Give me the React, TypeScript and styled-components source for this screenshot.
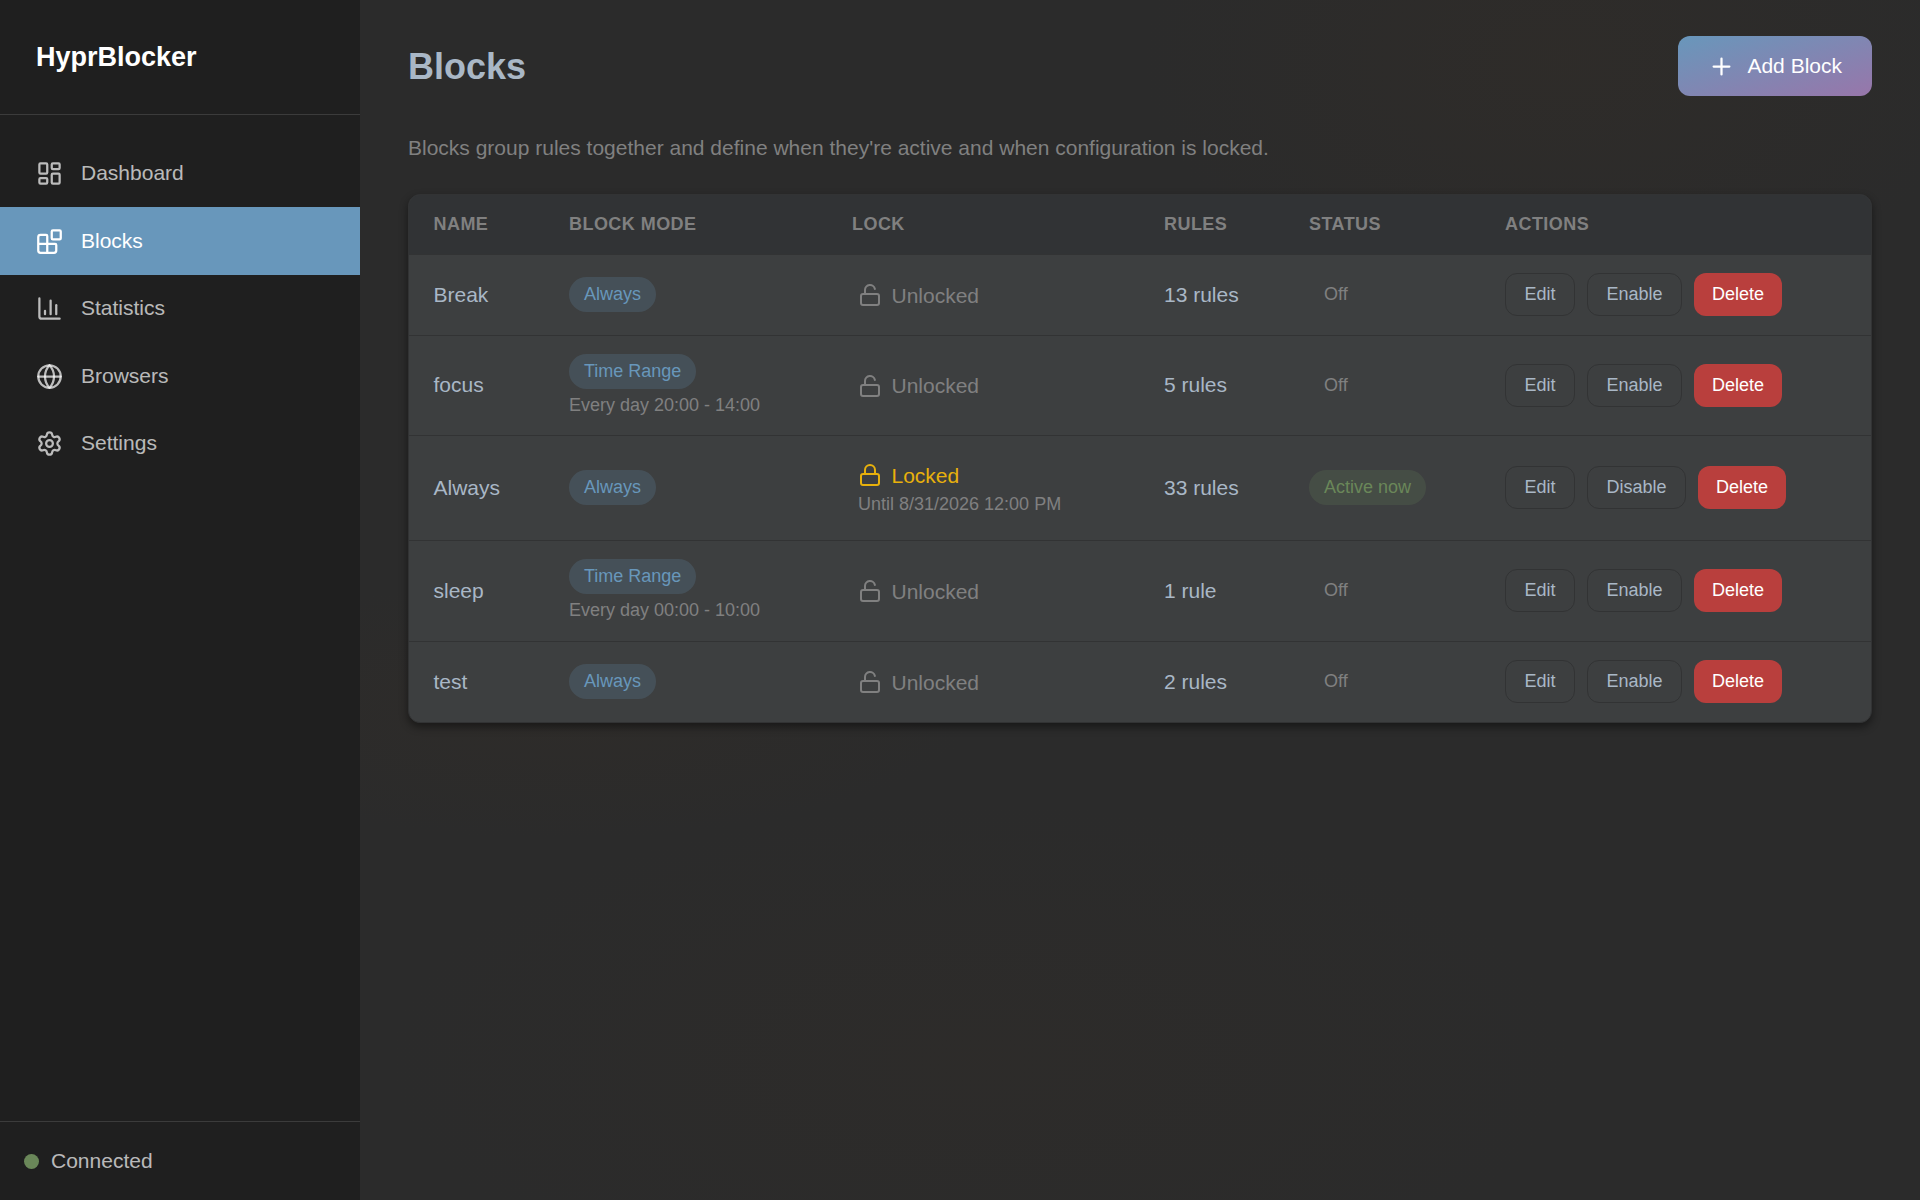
import React from 'react';
import styled, { createGlobalStyle, css } from 'styled-components';
import {
  LayoutDashboard,
  Blocks as BlocksIcon,
  ChartColumn,
  Globe,
  Settings,
  Plus,
  Lock,
  LockOpen,
} from 'lucide-react';

const color = {
  text: '#a9b7c6',
  muted: '#808080',
  primary: '#6897bb',
  purple: '#9876aa',
  green: '#6a8759',
  danger: '#b93f3d',
  warning: '#e8b10c',
  border: '#323334',
};

const GlobalStyle = createGlobalStyle`
  * { box-sizing: border-box; }
  body {
    margin: 0;
    font-family: "Liberation Sans", Arial, sans-serif;
    font-size: 21px;
    color: ${color.text};
    background: #2b2b2b;
  }
`;

const Shell = styled.div`
  display: flex;
  height: 1200px;
  background:
    radial-gradient(ellipse 420px 260px at 1560px 60px, rgba(64, 48, 32, 0.16), transparent),
    radial-gradient(ellipse 420px 130px at 560px 710px, rgba(64, 48, 32, 0.14), transparent),
    radial-gradient(ellipse 600px 260px at 980px 1060px, rgba(64, 48, 32, 0.1), transparent),
    #2b2b2b;
`;

const Sidebar = styled.aside`
  display: flex;
  flex-direction: column;
  width: 360px;
  flex-shrink: 0;
  background: #1f1f1f;
  color: rgba(255, 255, 255, 0.7);
`;

const Brand = styled.div`
  height: 115px;
  padding: 37px 36px 0;
  border-bottom: 1px solid #3b3b3b;
  color: #fff;
  font-size: 27px;
  font-weight: 700;
  line-height: 40px;
`;

const Nav = styled.nav`
  display: flex;
  flex-direction: column;
  flex: 1;
  padding-top: 24.5px;
`;

const NavItem = styled.a<{ $active?: boolean }>`
  display: flex;
  align-items: center;
  gap: 18px;
  height: 67.5px;
  padding: 0 36px;
  line-height: 31px;
  ${(p) =>
    p.$active &&
    css`
      background: ${color.primary};
      color: #fff;
    `}

  svg {
    position: relative;
    top: 0.5px;
  }
`;

const NavLabel = styled.span`
  padding-bottom: 1px;
`;

const Connection = styled.div`
  display: flex;
  align-items: center;
  gap: 12px;
  height: 79px;
  padding: 0 24px;
  border-top: 1px solid #3b3b3b;
`;

const Dot = styled.span`
  width: 15px;
  height: 15px;
  border-radius: 50%;
  background: ${color.green};
`;

const Main = styled.main`
  flex: 1;
  padding: 36px 48px;
`;

const PageHeader = styled.header`
  display: flex;
  align-items: center;
  justify-content: space-between;
  height: 60px;
`;

const Title = styled.h1`
  margin: 2px 0 0;
  font-size: 36px;
  line-height: 54px;
`;

const AddButton = styled.button`
  display: flex;
  align-items: center;
  gap: 12px;
  height: 60px;
  padding: 0 30px;
  border: 0;
  border-radius: 12px;
  background: linear-gradient(to bottom right, ${color.primary}, ${color.purple});
  color: #fff;
  font: inherit;
`;

const Intro = styled.p`
  margin: 35.5px 0 30.5px;
  color: ${color.muted};
  line-height: 31.5px;
`;

const Card = styled.section`
  overflow: hidden;
  border: 1px solid ${color.border};
  border-radius: 12px;
  background: #3d3f40;
  box-shadow: 0 4px 9px rgba(0, 0, 0, 0.45);
`;

const Table = styled.table`
  width: 100%;
  table-layout: fixed;
  border-collapse: separate;
  border-spacing: 0;
`;

const Col = styled.col<{ $width?: number }>`
  width: ${(p) => (p.$width ? `${p.$width}px` : 'auto')};
`;

const HeadCell = styled.th`
  height: 60px;
  padding: 0 24px;
  border-bottom: 1px solid ${color.border};
  background: #313335;
  color: ${color.muted};
  font-size: 18px;
  letter-spacing: 0.45px;
  text-align: left;
  text-transform: uppercase;

  &:first-child {
    padding-left: 24.5px;
  }
`;

const Row = styled.tr<{ $height: number }>`
  height: ${(p) => p.$height}px;

  &:not(:last-child) > td {
    border-bottom: 1px solid ${color.border};
  }
`;

const Cell = styled.td`
  padding: 0 24px;
  vertical-align: middle;
  white-space: nowrap;

  &:first-child {
    padding-left: 24.5px;
  }
`;

const Stack = styled.div<{ $offset: boolean }>`
  display: flex;
  flex-direction: column;
  align-items: flex-start;
  padding-top: ${(p) => (p.$offset ? 2 : 0)}px;
`;

const Badge = styled.span<{ $tone: 'blue' | 'green' | 'plain' }>`
  display: block;
  width: fit-content;
  height: 35px;
  padding: 0 15px;
  border-radius: 18px;
  font-size: 18px;
  line-height: 34px;
  ${(p) =>
    p.$tone === 'blue'
      ? css`
          background: rgba(104, 151, 187, 0.2);
          color: ${color.primary};
        `
      : p.$tone === 'green'
        ? css`
            background: rgba(106, 135, 89, 0.2);
            color: ${color.green};
          `
        : css`
            color: ${color.muted};
          `}
`;

const Note = styled.div`
  color: ${color.muted};
  font-size: 18px;
  line-height: 27px;
`;

const Schedule = styled(Note)`
  margin-top: 3px;
`;

const LockBox = styled.div<{ $locked: boolean }>`
  padding: ${(p) => (p.$locked ? 1 : 0)}px 0 0 6px;
`;

const LockState = styled.div<{ $locked: boolean }>`
  display: flex;
  align-items: center;
  gap: 9.5px;
  padding-top: 1px;
  color: ${(p) => (p.$locked ? color.warning : color.muted)};
  line-height: 31px;
`;

const Actions = styled.div`
  display: flex;
  gap: 12px;
`;

const ActionButton = styled.button<{ $danger?: boolean }>`
  height: 43px;
  padding: 0 18.5px;
  border: 1px solid ${color.border};
  border-radius: 12px;
  background: transparent;
  color: ${color.text};
  font: inherit;
  font-size: 18px;
  line-height: 39px;
  ${(p) =>
    p.$danger &&
    css`
      padding: 0 18px;
      border: 0;
      background: ${color.danger};
      color: #fff;
      line-height: 41px;
    `}
`;

const navItems = [
  { label: 'Dashboard', icon: LayoutDashboard },
  { label: 'Blocks', icon: BlocksIcon, active: true },
  { label: 'Statistics', icon: ChartColumn },
  { label: 'Browsers', icon: Globe },
  { label: 'Settings', icon: Settings },
];

interface Block {
  name: string;
  mode: string;
  schedule?: string;
  lockedUntil?: string;
  rules: string;
  active?: boolean;
  height: number;
}

const blocks: Block[] = [
  { name: 'Break', mode: 'Always', rules: '13 rules', height: 81 },
  { name: 'focus', mode: 'Time Range', schedule: 'Every day 20:00 - 14:00', rules: '5 rules', height: 100 },
  { name: 'Always', mode: 'Always', lockedUntil: 'Until 8/31/2026 12:00 PM', rules: '33 rules', active: true, height: 105 },
  { name: 'sleep', mode: 'Time Range', schedule: 'Every day 00:00 - 10:00', rules: '1 rule', height: 101 },
  { name: 'test', mode: 'Always', rules: '2 rules', height: 80 },
];

const columns = [
  { label: 'Name', width: 136 },
  { label: 'Block Mode', width: 283 },
  { label: 'Lock', width: 312 },
  { label: 'Rules', width: 145 },
  { label: 'Status', width: 196 },
  { label: 'Actions' },
];

function BlockRow({ block }: { block: Block }) {
  const locked = Boolean(block.lockedUntil);
  const LockIcon = locked ? Lock : LockOpen;
  return (
    <Row $height={block.height}>
      <Cell>{block.name}</Cell>
      <Cell>
        <Stack $offset={Boolean(block.schedule)}>
          <Badge $tone="blue">{block.mode}</Badge>
          {block.schedule && <Schedule>{block.schedule}</Schedule>}
        </Stack>
      </Cell>
      <Cell>
        <LockBox $locked={locked}>
          <LockState $locked={locked}>
            <LockIcon size={24} />
            {locked ? 'Locked' : 'Unlocked'}
          </LockState>
          {locked && <Note>{block.lockedUntil}</Note>}
        </LockBox>
      </Cell>
      <Cell>{block.rules}</Cell>
      <Cell>
        <Badge $tone={block.active ? 'green' : 'plain'}>{block.active ? 'Active now' : 'Off'}</Badge>
      </Cell>
      <Cell>
        <Actions>
          <ActionButton>Edit</ActionButton>
          <ActionButton>{block.active ? 'Disable' : 'Enable'}</ActionButton>
          <ActionButton $danger>Delete</ActionButton>
        </Actions>
      </Cell>
    </Row>
  );
}

export default function App() {
  return (
    <>
      <GlobalStyle />
      <Shell>
        <Sidebar>
          <Brand>HyprBlocker</Brand>
          <Nav>
            {navItems.map(({ label, icon: Icon, active }) => (
              <NavItem key={label} $active={active}>
                <Icon size={27} />
                <NavLabel>{label}</NavLabel>
              </NavItem>
            ))}
          </Nav>
          <Connection>
            <Dot />
            Connected
          </Connection>
        </Sidebar>
        <Main>
          <PageHeader>
            <Title>Blocks</Title>
            <AddButton>
              <Plus size={27} />
              Add Block
            </AddButton>
          </PageHeader>
          <Intro>Blocks group rules together and define when they're active and when configuration is locked.</Intro>
          <Card>
            <Table>
              <colgroup>
                {columns.map((c) => (
                  <Col key={c.label} $width={c.width} />
                ))}
              </colgroup>
              <thead>
                <tr>
                  {columns.map((c) => (
                    <HeadCell key={c.label}>{c.label}</HeadCell>
                  ))}
                </tr>
              </thead>
              <tbody>
                {blocks.map((b) => (
                  <BlockRow key={b.name} block={b} />
                ))}
              </tbody>
            </Table>
          </Card>
        </Main>
      </Shell>
    </>
  );
}
